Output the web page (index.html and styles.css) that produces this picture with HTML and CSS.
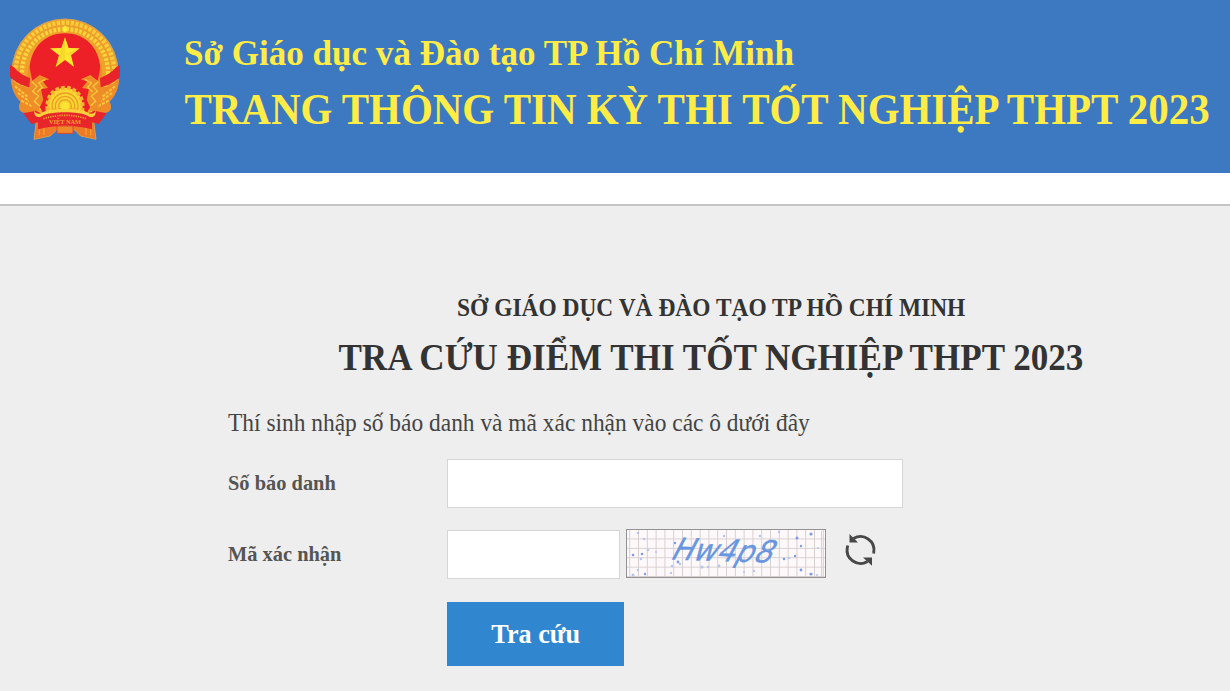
FILE: index.html
```html
<!DOCTYPE html>
<html lang="vi">
<head>
<meta charset="utf-8">
<title>Tra cứu điểm thi</title>
<link rel="stylesheet" href="styles.css">
</head>
<body>
<header class="banner">
  <svg class="emblem" viewBox="0 0 390 420" aria-label="Quốc huy Việt Nam">
    <path d="M110 325L102 388L150 378L170 360H224L242 378L288 388L280 325Z" fill="#ee7a28" stroke="#d9a04a" stroke-width="3"/>
    <path d="M118 335V376M132 336V374M258 336V374M272 335V376" stroke="#f5a02c" stroke-width="4"/>
    <circle cx="195" cy="186" r="159" fill="#f0a12c" stroke="#cfa25c" stroke-width="3"/>
    <circle cx="195" cy="186" r="148" fill="none" stroke="#f9cd3a" stroke-width="13" stroke-dasharray="9 5"/>
    <circle cx="195" cy="186" r="129" fill="none" stroke="#f8d53b" stroke-width="13" stroke-dasharray="8 5"/>
    <circle cx="195" cy="186" r="138" fill="none" stroke="#e09a2a" stroke-width="3" stroke-dasharray="6 5"/>
    <ellipse cx="195" cy="57" rx="6" ry="10" fill="#ffe936"/>
    <path d="M195 70C125 70 87 125 88 190C89 225 105 270 130 310H260C285 270 302 225 302 190C303 125 265 70 195 70Z" fill="#ed1f27"/>
    <path d="M32 205C45 222 66 230 92 234L112 310L72 308C52 305 55 283 62 275C44 262 33 230 32 205ZM358 205C345 222 324 230 298 234L278 310L318 308C338 305 335 283 328 275C346 262 357 230 358 205Z" fill="#ef8c28"/>
    <path d="M45 229L83 260M54 249L91 276M64 272L99 290M345 229L307 260M336 249L299 276M326 272L291 290" fill="none" stroke="#fac83b" stroke-width="6" stroke-dasharray="9 4"/>
    <path d="M86 160L97 212L119 195L148 208L128 214L144 234L123 238L130 270L113 306L88 280L80 225ZM304 160L293 212L271 195L242 208L262 214L246 234L267 238L260 270L277 306L302 280L310 225Z" fill="#ee8e28"/>
    <path d="M95 215L111 229L98 244L116 258L103 274L119 288M135 209L116 219L127 232L112 246M295 215L279 229L292 244L274 258L287 274L271 288M255 209L274 219L263 232L278 246" fill="none" stroke="#f9c83c" stroke-width="4"/>
    <path d="M30 165L42 172C55 187 68 196 90 204L88 232C64 226 43 214 30 200ZM360 165L348 172C335 187 322 196 300 204L302 232C326 226 347 214 360 200Z" fill="#e9232a"/>
    <path d="M143 300C138 260 160 235 195 233C230 235 252 260 247 300Z" fill="#f9d733" stroke="#f5b52f" stroke-width="12" stroke-dasharray="11 6"/>
    <g fill="none" stroke="#ee9c27" stroke-width="4"><circle cx="195" cy="288" r="39"/><circle cx="195" cy="288" r="29"/><circle cx="195" cy="288" r="19"/></g>
    <circle cx="195" cy="288" r="11" fill="#ffe432"/>
    <path d="M195 82L206 114L239 115L213 136L222 171L195 150L167 171L177 136L150 115L184 114Z" fill="#ffe82c"/>
    <path d="M195 82V150L167 171L177 136ZM195 132L239 115L213 136Z" fill="#f6c529" opacity=".5"/>
    <path d="M70 310L108 302C132 319 151 304 195 304C239 304 258 319 282 302L320 310L296 342L276 337V358C222 344 168 344 114 358V337L94 342Z" fill="#e8252a"/>
    <path d="M103 302C101 323 119 325 127 317C151 303 239 303 263 317C271 325 289 323 287 302C278 320 261 306 252 302C220 295 170 295 138 302C129 306 112 320 103 302Z" fill="#f8d23b"/>
    <path d="M130 326Q195 306 260 326" fill="none" stroke="#f2a12e" stroke-width="5" stroke-dasharray="4 3"/>
    <path d="M171 348H219V370H171Z" fill="#ef8a2a" stroke="#e3452a" stroke-width="3"/>
    <text class="emblem-name" x="195" y="343" text-anchor="middle">VIỆT NAM</text>
  </svg>
  <div class="banner-text">
    <div class="banner-office"><span>Sở Giáo dục và Đào tạo TP Hồ Chí Minh</span></div>
    <div class="banner-title"><span>TRANG THÔNG TIN KỲ THI TỐT NGHIỆP THPT 2023</span></div>
  </div>
</header>
<div class="strip"></div>
<main class="content">
  <div class="headings">
    <h2 class="office"><span>SỞ GIÁO DỤC VÀ ĐÀO TẠO TP HỒ CHÍ MINH</span></h2>
    <h1 class="title"><span>TRA CỨU ĐIỂM THI TỐT NGHIỆP THPT 2023</span></h1>
  </div>
  <form class="lookup">
    <p class="hint"><span>Thí sinh nhập số báo danh và mã xác nhận vào các ô dưới đây</span></p>
    <div class="row">
      <label class="label" for="sbd"><span>Số báo danh</span></label>
      <input class="field field-wide" id="sbd" type="text">
    </div>
    <div class="row row-code">
      <label class="label label-code" for="code"><span>Mã xác nhận</span></label>
      <input class="field field-code" id="code" type="text">
      <svg class="captcha" viewBox="0 0 200 49">
        <defs><pattern id="grid" x="4.200" y="1" width="8.800" height="9.400" patternUnits="userSpaceOnUse"><path d="M8.300 0V9.400M0 9H8.800" stroke="#d8cfcf" fill="none"/></pattern></defs>
        <rect x=".5" y=".5" width="199" height="48" fill="#fdf9fb"/>
        <rect x="1" y="1" width="198" height="47" fill="url(#grid)"/>
        <g fill="#7d9be8"><circle cx="7" cy="26" r="1.300"/><circle cx="16" cy="25" r="1.300"/><circle cx="19" cy="45" r="1.200"/><circle cx="52" cy="33" r="1.400"/><circle cx="171" cy="9" r="1.500"/><circle cx="169" cy="27" r="1.200"/><circle cx="185" cy="5" r="1.600"/><circle cx="175" cy="17" r="1.200"/><circle cx="158" cy="30" r="1.300"/><circle cx="175" cy="41" r="1.400"/><circle cx="185" cy="45" r="1.600"/><circle cx="49" cy="14" r="1.200"/></g>
        <g fill="#b7c5f1"><circle cx="12" cy="4" r="1.300"/><circle cx="18" cy="10" r="1.200"/><circle cx="15" cy="30" r="1.300"/><circle cx="22" cy="21" r="1.300"/><circle cx="7" cy="46" r="1.500"/><circle cx="12" cy="41" r="1.200"/><circle cx="30" cy="23" r="1"/><circle cx="46" cy="37" r="1.300"/><circle cx="54" cy="35" r="1.300"/><circle cx="76" cy="38" r="1.600"/><circle cx="82" cy="38" r="1.200"/><circle cx="93" cy="37" r="1.400"/><circle cx="98" cy="7" r="1.300"/><circle cx="134" cy="7" r="1.300"/><circle cx="153" cy="3" r="1.200"/><circle cx="163" cy="29" r="1.300"/><circle cx="192" cy="19" r="1"/><circle cx="191" cy="46" r="1"/><circle cx="128" cy="42" r="1.200"/><circle cx="118" cy="43" r="1"/><circle cx="45" cy="44" r="1.200"/><circle cx="144" cy="11" r="1"/></g>
        <path d="M195.500 2V47" stroke="#cbd2ed"/>
        <rect x=".5" y=".5" width="199" height="48" fill="none" stroke="#929292"/>
        <text class="captcha-text" transform="translate(43 30.500) rotate(1.800) skewX(-26)" textLength="101" lengthAdjust="spacingAndGlyphs">Hw4p8</text>
      </svg>
      <svg class="refresh" viewBox="0 0 32 34">
        <path d="M8.500 5.600A13.400 13.400 0 0 1 28.700 19.500M22.500 28.400A13.400 13.400 0 0 1 2.300 14.500M28.700 19.500L28.500 20.500M2.300 14.500L2.700 12.500" fill="none" stroke="#484848" stroke-width="2.900"/>
        <path d="M4.500 1V9.500H13ZM27 32.800V24.500H18Z" fill="#484848"/>
      </svg>
    </div>
    <button class="submit" type="button"><span>Tra cứu</span></button>
  </form>
</main>
</body>
</html>
```
FILE: styles.css
```css
* { box-sizing: border-box; }
body {
  margin: 0;
  height: 691px;
  overflow: hidden;
  background: #eee;
  font-family: "Liberation Serif", "Times New Roman", serif;
  color: #333;
}
.banner {
  display: flex;
  height: 173px;
  background: #3d79c1;
  color: #ffec45;
  font-weight: bold;
  white-space: nowrap;
}
.emblem { width: 130px; height: 140px; margin-top: 10px; flex: none; }
.emblem-name { font-size: 19px; font-weight: bold; fill: #f5a62e; }
.banner-text { padding: 28px 0 0 54px; }
.banner-text span, .content span { display: inline-block; transform-origin: left center; }
.banner-office { font-size: 36px; line-height: 51px; }
.banner-office span { transform: scaleX(.974); }
.banner-title { font-size: 43.5px; line-height: 60px; }
.banner-title span { transform: translateX(.5px) scaleX(.941); }
.strip { height: 33px; background: #fff; border-bottom: 2px solid #c4c4c4; }
.content { padding: 86px 0 0 228px; white-space: nowrap; }
.headings { width: 966px; text-align: center; }
.office { margin: 0; font-size: 25px; line-height: 32px; }
.content .office span { transform: scaleX(.937); transform-origin: center; }
.title { margin: 0; font-size: 37px; line-height: 68px; }
.content .title span { transform: scaleX(.948); transform-origin: center; }
.lookup { display: flex; flex-direction: column; align-items: flex-start; }
.hint { margin: 0; padding-top: 15px; font-size: 24.5px; line-height: 32px; color: #444; }
.hint span { transform: scaleX(.956); }
.row { display: flex; align-items: center; margin-top: 20px; height: 49px; }
.row-code { margin-top: 21px; height: 50px; }
.label { width: 219px; font-size: 21px; font-weight: bold; color: #555; }
.label span { transform: scaleX(.972); }
.field { height: 49px; border: 1px solid #d6d6d6; background: #fff; padding: 0 12px; font: inherit; }
.field-wide { width: 456px; }
.field-code { width: 173px; margin-top: 1px; }
.captcha { width: 200px; height: 49px; margin: -2px 0 0 6px; }
.captcha-text { font-family: "DejaVu Sans", sans-serif; font-size: 30.5px; fill: #6896e0; stroke: #6896e0; stroke-width: .3px; }
.refresh { width: 32px; height: 34px; margin: -9px 0 0 19px; overflow: visible; }
.submit {
  width: 177px;
  height: 64px;
  margin: 23px 0 0 219px;
  padding: 0;
  border: 0;
  background: #3087d0;
  color: #fff;
  font: bold 27px "Liberation Serif", serif;
}
.content .submit span { transform: scaleX(.97); transform-origin: center; }
```
